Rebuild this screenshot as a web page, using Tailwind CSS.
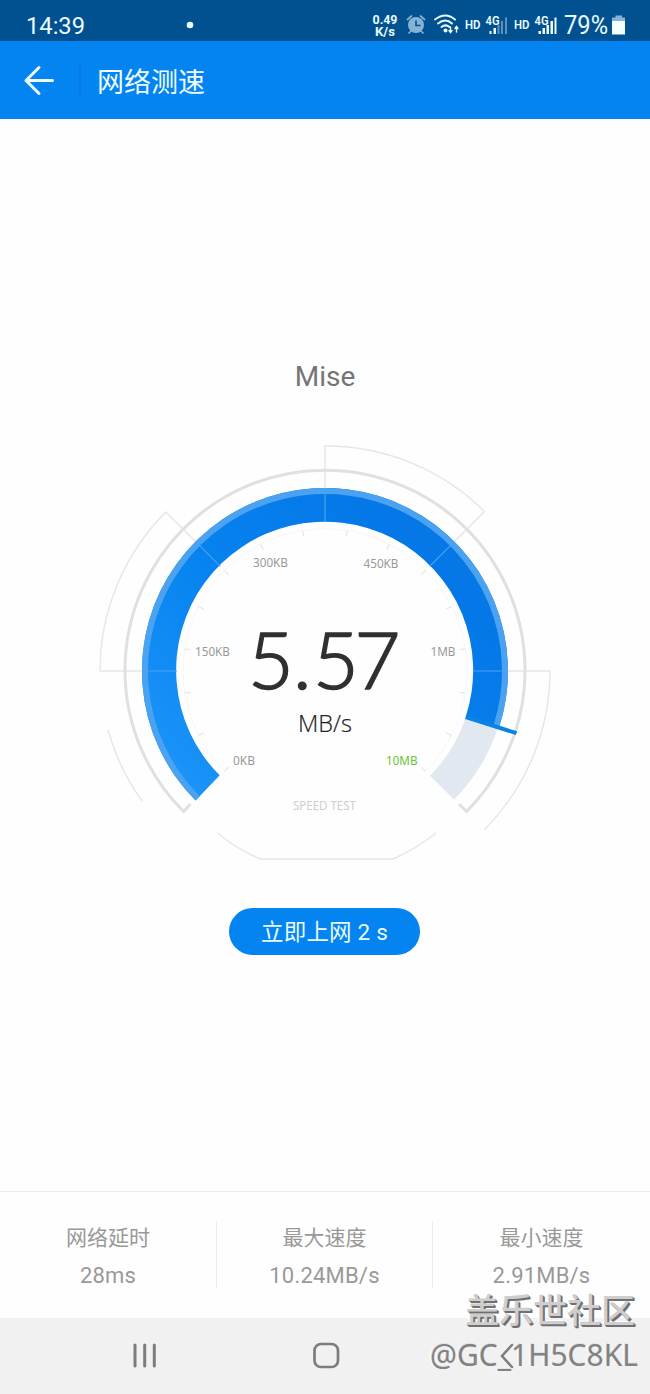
<!DOCTYPE html>
<html lang="zh-CN">
<head>
    <meta charset="UTF-8">
    <meta name="viewport" content="width=device-width, initial-scale=1.0">
    <title>网络测速</title>
    <script src="https://cdn.jsdelivr.net/npm/@tailwindcss/browser@4"></script>
</head>
<body class="relative flex flex-col w-[650px] h-[1394px] overflow-hidden bg-[#fefefe] font-[Roboto,'Noto_Sans_CJK_SC',sans-serif]">

    <!-- Status bar -->
    <div class="h-[41px] shrink-0 bg-[#015191] text-[#e9fbff]">
        <svg class="block" width="650" height="41" viewBox="0 0 650 41" fill="currentColor">
            <text x="26" y="34" font-size="24" textLength="59" lengthAdjust="spacingAndGlyphs">14:39</text>
            <circle cx="190" cy="25" r="3.3" />
            <g font-weight="700" font-size="12">
                <text x="372.500" y="23.500" textLength="25" lengthAdjust="spacingAndGlyphs">0.49</text>
                <text x="375" y="35.500" textLength="20" lengthAdjust="spacingAndGlyphs">K/s</text>
            </g>
            <!-- Alarm -->
            <g fill="#86b3d4" stroke="#86b3d4">
                <circle cx="416" cy="25" r="8" stroke="none" />
                <path d="M407.500 19.500l4-3.500M424.500 19.500l-4-3.500M411 31l-2 2M421 31l2 2" stroke-width="1.700" stroke-linecap="round" />
                <path d="M416 20.500v5h4.500" fill="none" stroke="#015191" stroke-width="1.600" />
            </g>
            <!-- Wifi -->
            <g fill="none" stroke="currentColor" stroke-width="2" stroke-linecap="round">
                <path d="M435 19.500q10.500-8 20 0M438 23.500q7.500-6 14 0M441.500 27q4-3.200 8 0" />
                <path d="M450.500 27v5M449 30.500l1.500 2 1.500-2M456.500 32v-5M455 28.500l1.500-2 1.500 2" stroke-width="1.400" />
            </g>
            <circle cx="445.500" cy="30.500" r="2" />
            <g font-weight="600" font-size="12">
                <text x="465" y="28.500" textLength="15.500" lengthAdjust="spacingAndGlyphs">HD</text>
                <text x="514" y="28.500" textLength="15.500" lengthAdjust="spacingAndGlyphs">HD</text>
            </g>
            <g font-weight="600" font-size="12">
                <text x="485.500" y="24.500" textLength="14" lengthAdjust="spacingAndGlyphs">4G</text>
                <text x="534.500" y="24.500" textLength="14" lengthAdjust="spacingAndGlyphs">4G</text>
            </g>
            <path d="M489.500 31h2v3h-2zM493.500 28h2.500v6h-2.500z" />
            <path d="M497.500 25h2v9h-2zM501 21h2v13h-2zM505 17.500h2v16.500h-2z" fill="#5c93bd" />
            <path d="M538.500 31h2.500v3h-2.500zM542.500 28h2.500v6h-2.500zM546.500 25h2.500v9h-2.500zM550.500 21h2.500v13h-2.500zM554.500 17.500h2v16.500h-2z" />
            <text x="564" y="34" font-size="25" textLength="44" lengthAdjust="spacingAndGlyphs">79%</text>
            <path d="M612 21v-3.500h3.500v-2h6.500v2h3v3.500z" fill="#86b3d4" />
            <path d="M612 21h13v13.500h-13z" fill="#f4ffff" />
        </svg>
    </div>

    <!-- Header -->
    <div class="flex items-center h-[78px] shrink-0 pl-[23px] bg-[#0484f0] text-[#eefcff]">
        <svg class="w-[31px] h-[31px]" viewBox="0 0 31 31" fill="none" stroke="currentColor" stroke-width="3" stroke-linecap="round" stroke-linejoin="round">
            <path d="M16 2.500L3 15.500l13 13M3 15.500h26.500" />
        </svg>
        <div class="w-0.5 h-9 ml-[25px] bg-[#0b79dd]"></div>
        <h1 class="mt-1.5 ml-4 text-[27px] leading-9">网络测速</h1>
    </div>

    <!-- Speed gauge -->
    <div class="flex flex-col items-center h-[1072px] shrink-0">
        <p class="mt-[239px] text-[28px] leading-[38px] text-[#757575]">Mise</p>
        <svg class="mt-[34px]" width="470" height="440" viewBox="90 430 470 440" fill="none">
            <defs>
                <linearGradient id="band" gradientUnits="userSpaceOnUse" x1="200" y1="800" x2="440" y2="560">
                    <stop offset="0" stop-color="#1b93f8" />
                    <stop offset="0.500" stop-color="#0683f0" />
                    <stop offset="1" stop-color="#0577e6" />
                </linearGradient>
            </defs>

            <!-- Outer frame -->
            <g stroke="#e6e6e6" stroke-width="1.400">
                <path d="M325 488V446A225 225 0 0 1 484.500 511.500L454 542" />
                <path d="M196 542L165.900 511.900A225 225 0 0 0 100 671H142" />
                <path d="M508 671H550A225 225 0 0 1 484.500 829.500" />
                <path d="M108 730A225 225 0 0 0 142 801" />
                <path d="M217.500 833Q238 850 260.500 859H393Q416 849 436 833" />
            </g>
            <path d="M190.500 804L183.500 811.500A200 200 0 1 1 466.500 811.500L459 804" stroke="#e0e0e0" stroke-width="3" />

            <!-- Bands -->
            <path d="M465.700 717.500A148 148 0 0 1 430 775.700L454 799.500A182 182 0 0 0 498 727.500Z" fill="#e2e8ef" />
            <path d="M219.700 775.300A148.500 148.500 0 1 1 465.700 716.700L499 727.600A183 183 0 1 0 195.600 800.400Z" fill="url(#band)" />
            <path d="M197.700 798.300A180 180 0 1 1 496.200 726.600" stroke="#4ba2f1" stroke-width="6" />
            <g stroke="#4aa2f1" stroke-width="1.200">
                <path d="M325 488v34M195.600 541.600l24.800 24.800M454.400 541.600l-24.800 24.800M142 671h35M473 671h35" />
            </g>
            <path d="M465.700 717L516.500 733.200" stroke="#0983e8" stroke-width="4" />

            <!-- Ticks -->
            <path d="M224.700 771.300A142 142 0 1 1 425.300 771.300" stroke="#f6f7f7" stroke-width="1" />
            <g id="ticks" stroke="#e3e7e8" stroke-width="1.200"></g>

            <!-- Labels -->
            <g class="font-['Noto_Sans']" font-size="12" fill="#999">
                <text x="195" y="655.500" textLength="35" lengthAdjust="spacingAndGlyphs">150KB</text>
                <text x="253" y="567" textLength="35" lengthAdjust="spacingAndGlyphs">300KB</text>
                <text x="363.500" y="567.500" textLength="35" lengthAdjust="spacingAndGlyphs">450KB</text>
                <text x="430.500" y="655.500" textLength="25" lengthAdjust="spacingAndGlyphs">1MB</text>
                <text x="233" y="764.500" textLength="22" lengthAdjust="spacingAndGlyphs">0KB</text>
                <text x="386" y="764.500" textLength="31.500" lengthAdjust="spacingAndGlyphs" fill="#6cc436">10MB</text>
                <text x="293" y="810" textLength="63" lengthAdjust="spacingAndGlyphs" fill="#cfcfcf">SPEED TEST</text>
            </g>
            <text class="font-[Lato]" x="248 293 313 354.500" y="689" font-size="79" font-weight="300" fill="#303030" stroke="#303030" stroke-width="1.600">5.57</text>
            <text class="font-['Open_Sans']" x="298" y="732" font-size="23.500" font-weight="300" textLength="54" lengthAdjust="spacingAndGlyphs" fill="#222" stroke="#222" stroke-width="0.200">MB/s</text>
        </svg>
        <button class="mt-[38px] mr-px w-[191px] h-[47px] pt-0.5 rounded-full bg-[#0484f0] text-[#e9fbff] text-[22.5px] leading-[43px] tracking-[0.2px]">立即上网 2 s</button>
    </div>

    <!-- Results -->
    <div class="flex h-[127px] shrink-0 border-t border-[#ececec] text-center text-[#999]">
        <div class="w-[216px] pt-[30px]">
            <p class="text-[21px] leading-8">网络延时</p>
            <p class="mt-2.5 text-[22px] leading-6 tracking-[0.2px]">28ms</p>
        </div>
        <div class="w-px h-[67px] mt-[29px] bg-[#ebebeb]"></div>
        <div class="w-[215px] pt-[30px]">
            <p class="text-[21px] leading-8">最大速度</p>
            <p class="mt-2.5 text-[22px] leading-6 tracking-[0.2px]">10.24MB/s</p>
        </div>
        <div class="w-px h-[67px] mt-[29px] bg-[#ebebeb]"></div>
        <div class="w-[217px] pt-[30px]">
            <p class="text-[21px] leading-8">最小速度</p>
            <p class="mt-2.5 text-[22px] leading-6 tracking-[0.2px]">2.91MB/s</p>
        </div>
    </div>

    <!-- Navigation bar -->
    <div class="h-[76px] shrink-0 bg-[#f1f1f1]">
        <svg class="block" width="650" height="76" viewBox="0 1318 650 76" fill="none" stroke="#7d7d7d" stroke-width="3" stroke-linecap="round">
            <path d="M135 1345v21M144.700 1345v21M154.300 1345v21" />
            <rect x="314.500" y="1344" width="23.500" height="23" rx="6.500" stroke-width="2.700" />
            <path d="M512 1345l-10 11 10 11" stroke-width="2.500" />
        </svg>
    </div>

    <!-- Watermark -->
    <div class="absolute right-3 top-[1292px] flex flex-col items-end gap-3 whitespace-nowrap leading-[34px]">
        <p class="mr-[3px] font-['Noto_Sans_CJK_SC'] text-[34px] font-medium text-[#cfcdcd] [text-shadow:1px_1px_0_#707070,2px_2px_0_#707070,-1px_-1px_0_#fff]">盖乐世社区</p>
        <p class="font-['Noto_Sans'] text-[30px] text-[#828282] [text-shadow:-1px_-1px_0_#e2e2e2,-2px_-1px_0_#fff]">@GC_1H5C8KL</p>
    </div>

    <script>
        // One tick every 18 degrees around the dial
        const ticks = document.getElementById("ticks");
        for (let deg = -135; deg <= 135; deg += 18) {
            const line = document.createElementNS("http://www.w3.org/2000/svg", "line");
            line.setAttribute("x1", 325);
            line.setAttribute("x2", 325);
            line.setAttribute("y1", 529);
            line.setAttribute("y2", 535);
            line.setAttribute("transform", `rotate(${deg} 325 671)`);
            ticks.appendChild(line);
        }
    </script>

</body>
</html>
